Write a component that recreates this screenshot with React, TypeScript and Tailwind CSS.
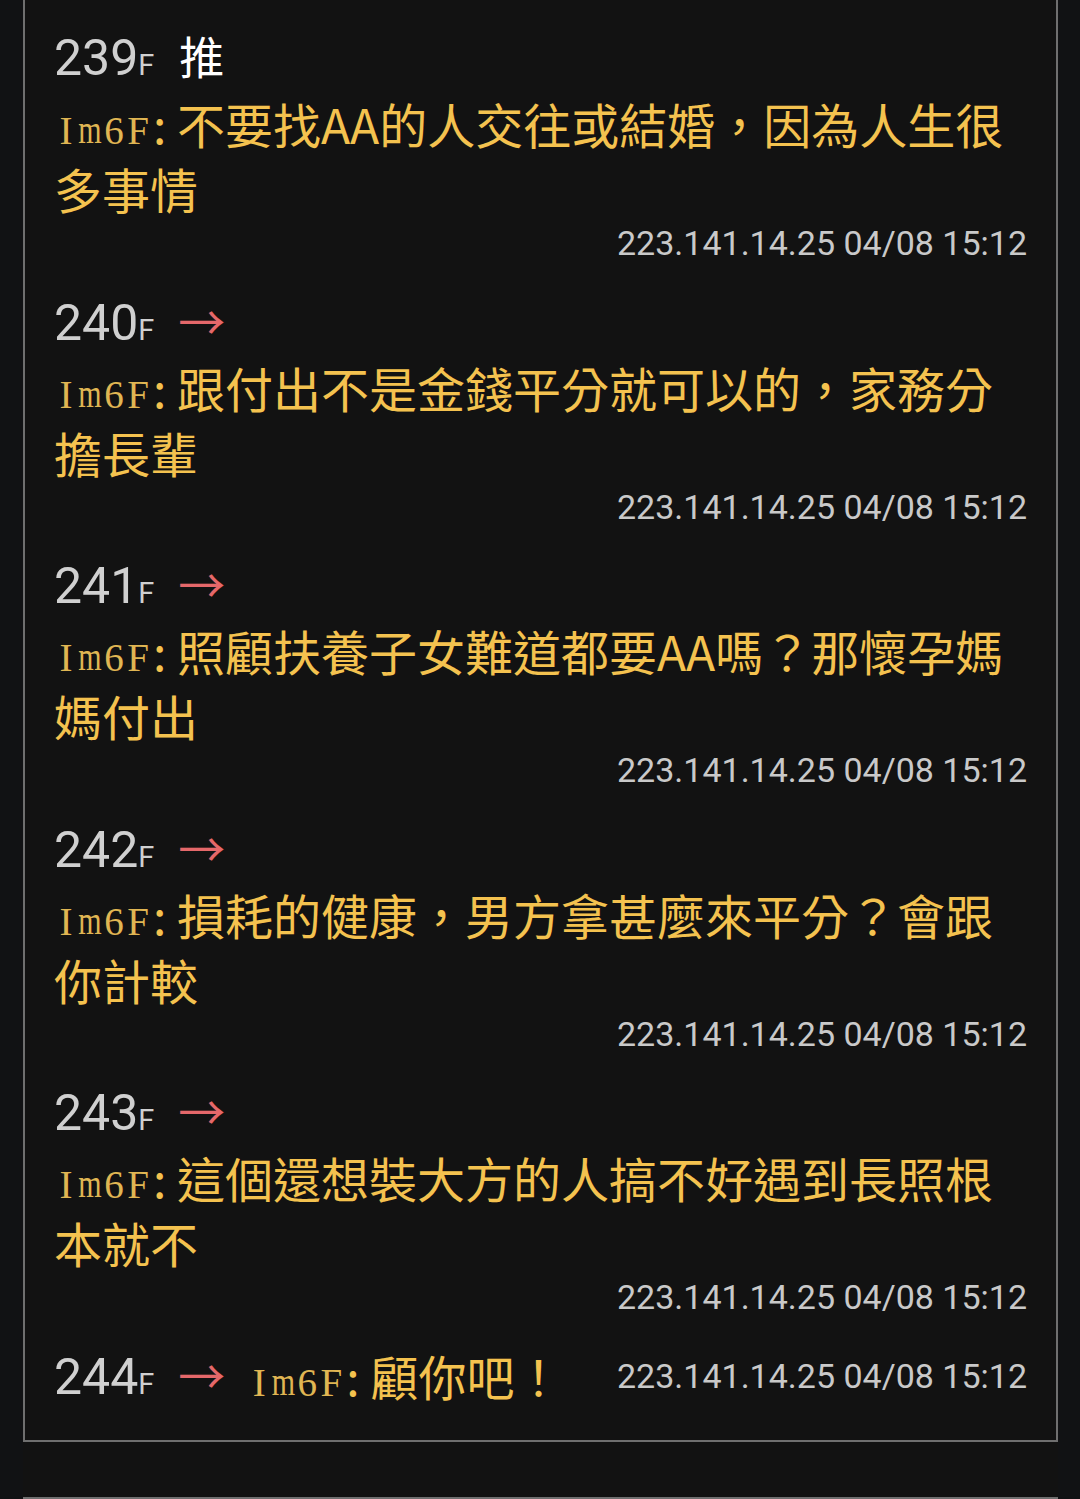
import React from "react";

type Push = {
  floor: number;
  tag: "推" | "→";
  user: string;
  text: string;
  ip: string;
};

const pushes: Push[] = [
  { floor: 239, tag: "推", user: "Im6F", text: "不要找AA的人交往或結婚，因為人生很多事情", ip: "223.141.14.25 04/08 15:12" },
  { floor: 240, tag: "→", user: "Im6F", text: "跟付出不是金錢平分就可以的，家務分擔長輩", ip: "223.141.14.25 04/08 15:12" },
  { floor: 241, tag: "→", user: "Im6F", text: "照顧扶養子女難道都要AA嗎？那懷孕媽媽付出", ip: "223.141.14.25 04/08 15:12" },
  { floor: 242, tag: "→", user: "Im6F", text: "損耗的健康，男方拿甚麼來平分？會跟你計較", ip: "223.141.14.25 04/08 15:12" },
  { floor: 243, tag: "→", user: "Im6F", text: "這個還想裝大方的人搞不好遇到長照根本就不", ip: "223.141.14.25 04/08 15:12" },
];

const sans = "font-['Roboto','Noto_Sans_CJK_TC',sans-serif]";
const cjk = "font-['Noto_Sans_CJK_TC','Noto_Sans',sans-serif]";
const serif = "font-['Liberation_Serif','DejaVu_Serif',serif]";

// ptt user id: serif letters on a fixed grid, like the old mingliu look
function UserId({ id }: { id: string }) {
  return (
    <span className="inline-block mr-[3px] leading-none">
      {id.split("").map((c, i) => (
        <span
          key={i}
          className={
            c === "m"
              ? `${serif} inline-block w-[24px] text-center text-[30px] leading-none text-[#e0b653] scale-y-[1.3] origin-bottom`
              : `${serif} inline-block w-[24px] text-center text-[39px] leading-none text-[#e0b653]`
          }
        >
          {c}
        </span>
      ))}
    </span>
  );
}

function Header({ p }: { p: { floor: number; tag: string } }) {
  return (
    <div className="flex items-baseline shrink-0">
      <span className={`${sans} text-[50px] leading-none text-[#d0d0d0]`}>{p.floor}</span>
      <span className={`${sans} text-[29px] leading-none text-[#d0d0d0]`}>F</span>
      {p.tag === "推" ? (
        <span className={`${cjk} ml-[25px] text-[45px] leading-none text-white`}>推</span>
      ) : (
        <span className={`${cjk} ml-[24px] text-[47px] leading-none text-[#e5686a]`}>→</span>
      )}
    </div>
  );
}

function Entry({ p }: { p: Push }) {
  return (
    <div className="mb-[23.5px]">
      <div className="h-[66px] flex items-center">
        <Header p={p} />
      </div>
      <div className={`${cjk} text-[48px] leading-[65px] text-[#f4c24f]`}>
        <UserId id={p.user} />: {p.text}
      </div>
      <div className={`${sans} h-[44px] text-right text-[34px] leading-[44px] text-[#c9c9c9]`}>{p.ip}</div>
    </div>
  );
}

export default function App() {
  return (
    <div className="h-[1499px] w-[1080px] overflow-hidden bg-[#111214]">
      <div className="ml-[23px] w-[1035px] h-full bg-[#121212]">
        <div className="border-2 border-t-0 border-[#6f6f6f] pt-[25px] pb-[31px] pl-[29px] pr-[29px]">
          {pushes.map((p) => (
            <Entry key={p.floor} p={p} />
          ))}
          <div className="h-[66px] flex items-center">
            <Header p={{ floor: 244, tag: "→" }} />
            <div className={`${cjk} ml-[22px] text-[48px] leading-[65px] text-[#f4c24f] whitespace-nowrap`}>
              <UserId id="Im6F" />: 顧你吧！
            </div>
            <div className={`${sans} ml-auto text-[34px] leading-[44px] text-[#c9c9c9]`}>223.141.14.25 04/08 15:12</div>
          </div>
        </div>
        <div className="mt-[55px] h-[40px] border-2 border-[#6f6f6f]" />
      </div>
    </div>
  );
}
